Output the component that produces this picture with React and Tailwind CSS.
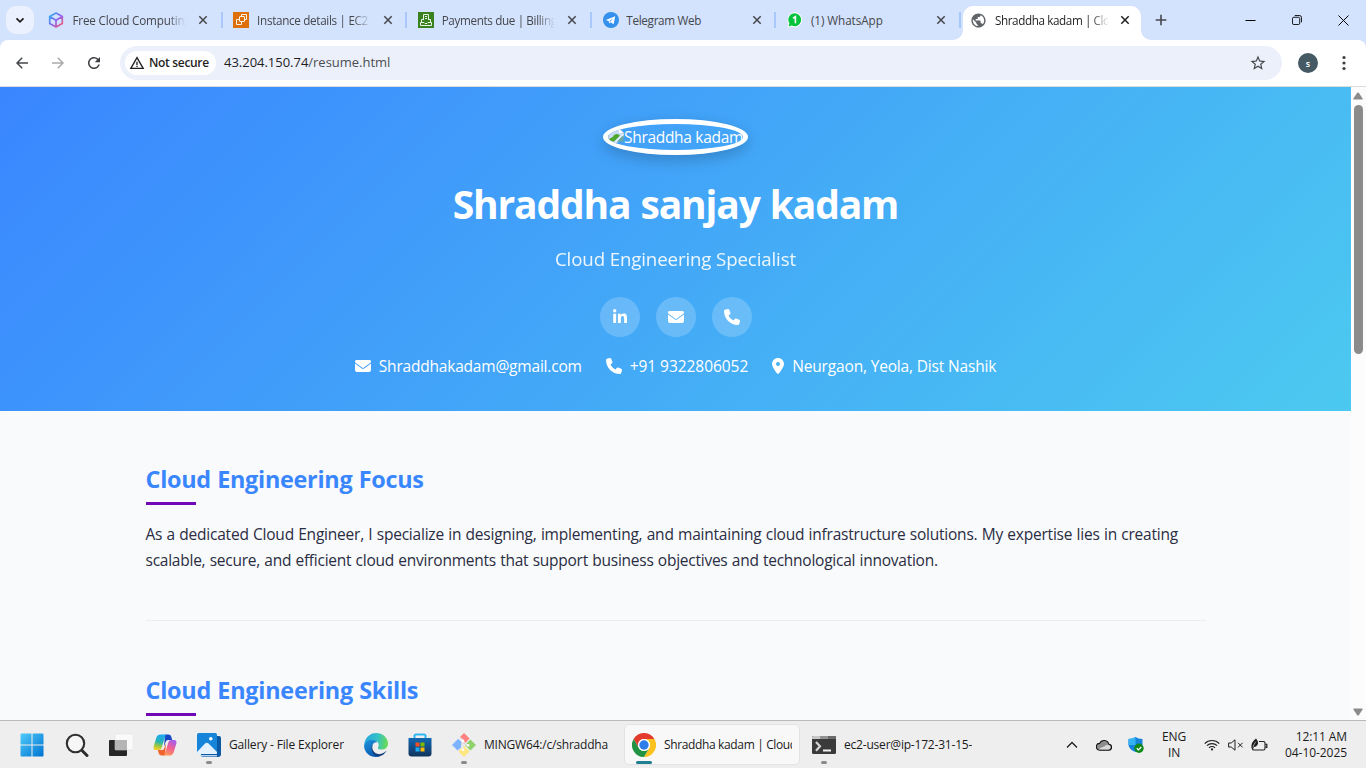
import { FaLinkedinIn, FaEnvelope, FaPhone, FaLocationDot } from "react-icons/fa6";
import { MdPublic, MdStarBorder, MdWarningAmber, MdRefresh } from "react-icons/md";

/* ---------- favicons ---------- */
const CubeIcon = () => (
  <svg viewBox="0 0 16 16" className="-ml-px mr-px size-4">
    <defs>
      <linearGradient id="cube" x1="0" y1="0" x2="1" y2="1">
        <stop offset="0" stopColor="#22b8f0" />
        <stop offset="0.5" stopColor="#8a63f5" />
        <stop offset="1" stopColor="#ff5a6e" />
      </linearGradient>
    </defs>
    <path d="M8 1 14.3 4.5V11.5L8 15 1.7 11.5V4.5ZM1.7 4.5 8 8.2 14.3 4.5M8 8.2V15" fill="none" stroke="url(#cube)" strokeWidth="1.7" strokeLinejoin="round" />
  </svg>
);
const Ec2Icon = () => (
  <svg viewBox="0 0 16 16" className="-ml-px mr-px size-4">
    <path d="M0 0H16V16H0Z" fill="#de700c" />
    <g fill="none" stroke="#fff3e3" strokeWidth="1">
      <rect x="6.5" y="4.5" width="5" height="5" rx=".5" />
      <path d="M8.5 4V2.5H13.5V7.5H12M6 7.5H3.5V12.5H8.5V10" />
    </g>
  </svg>
);
const BillingIcon = () => (
  <svg viewBox="0 0 16 16" className="size-4">
    <path d="M0 0H16V16H0Z" fill="#3a8220" />
    <g fill="none" stroke="#e9f5e2" strokeWidth="1">
      <path d="M5.5 8V2.5H10.5V8M7 4.5H9M7 6.5H9" />
      <path d="M5 7.5H3.5V10M11 7.5H12.5V10M2.5 10.5H6L7 11.5H9L10 10.5H13.5V13.5H2.5Z" />
    </g>
  </svg>
);
const TelegramIcon = () => (
  <svg viewBox="0 0 16 16" className="size-4">
    <circle cx="8" cy="8" r="8" fill="#3390ec" />
    <path d="M2.8 8 12.2 4.2 10.6 12.2 7.6 10.2 6.2 11.4 5.8 9.2Z" fill="#fff" />
    <path d="M6.3 9.2 10.5 5.9 7.2 9.8Z" fill="#3390ec" />
  </svg>
);
const WhatsAppIcon = () => (
  <svg viewBox="0 0 16 16" className="size-4">
    <path d="M8 .3A7.5 7.5 0 1 1 4.6 14.7L.5 15.6 1.4 11.4A7.5 7.5 0 0 1 8 .3Z" fill="#fff" />
    <path d="M8 1.3A6.5 6.5 0 1 1 4.7 13.6L1.6 14.4 2.4 11.3A6.5 6.5 0 0 1 8 1.3Z" fill="#06c33c" />
    <path d="M6 6.2 8.4 4.7V11.2" fill="none" stroke="#fff" strokeWidth="1.6" />
  </svg>
);
const Cross = () => (
  <svg viewBox="0 0 10 10" className="size-[10px] shrink-0">
    <path d="M1.3 1.3 8.7 8.7M8.7 1.3 1.3 8.7" stroke="currentColor" strokeWidth="1.5" />
  </svg>
);

const tabs = [
  { icon: <CubeIcon />, title: "Free Cloud Computing", cls: "tracking-[-0.19px]", fade: true },
  { icon: <Ec2Icon />, title: "Instance details | EC2", cls: "tracking-[-0.32px]", fade: true },
  { icon: <BillingIcon />, title: "Payments due | Billing", cls: "tracking-[-0.36px]", fade: true },
  { icon: <TelegramIcon />, title: "Telegram Web", cls: "tracking-[-0.3px]" },
  { icon: <WhatsAppIcon />, title: "(1) WhatsApp", cls: "tracking-[-0.05px]" },
];

const fadeMask = "[mask-image:linear-gradient(to_right,#000_84%,transparent)]";

function Tab({ icon, title, cls, fade }) {
  return (
    <div className="flex h-7 w-[184.6px] shrink-0 items-center pl-2 text-[#45474b]">
      {icon}
      <div className={`ml-[7.5px] w-[113.5px] overflow-hidden text-[11.7px] leading-4 whitespace-nowrap ${cls} ${fade ? fadeMask : ""}`}>{title}</div>
      <div className="ml-3"><Cross /></div>
      <div className="ml-[12.5px] h-4 w-[2px] bg-[#a8c7fa]" />
    </div>
  );
}

function TabStrip() {
  return (
    <div className="flex h-10 items-center bg-[#d3e2fd]">
      <div className="ml-[6px] grid size-7 place-items-center rounded-[10px] bg-[#ebf1fe]">
        <svg viewBox="0 0 10 10" className="size-[10px]"><path d="M1.5 3.3 5 6.8 8.5 3.3" fill="none" stroke="#1f1f1f" strokeWidth="1.8" /></svg>
      </div>
      <div className="ml-[7px] flex">
        {tabs.map((t) => <Tab key={t.title} {...t} />)}
      </div>
      <div className="relative -ml-px mt-[6px] flex h-[34px] w-[178px] items-center rounded-t-[10px] bg-white pb-[6px] pl-2 text-[#1f1f1f]">
        <svg viewBox="0 0 10 10" className="absolute -left-[10px] bottom-0 size-[10px]"><path d="M10 0V10H0A10 10 0 0 0 10 0Z" fill="#fff" /></svg>
        <svg viewBox="0 0 10 10" className="absolute -right-[10px] bottom-0 size-[10px]"><path d="M0 0V10H10A10 10 0 0 1 0 0Z" fill="#fff" /></svg>
        <MdPublic className="-ml-px size-[17px] text-[#5f6368]" />
        <div className={`ml-[8px] w-[114px] overflow-hidden text-[11.7px] leading-4 tracking-[-0.4px] whitespace-nowrap ${fadeMask}`}>Shraddha kadam | Cloud</div>
        <div className="ml-[11px]"><Cross /></div>
      </div>
      <svg viewBox="0 0 12 12" className="ml-[14px] size-3"><path d="M6 .7V11.3M.7 6H11.3" stroke="#45474b" strokeWidth="1.6" /></svg>
      <div className="mr-[17px] ml-auto flex items-center gap-[36px] text-black">
        <svg viewBox="0 0 11 11" className="size-[11px]"><path d="M.5 5.5H10.5" stroke="currentColor" /></svg>
        <svg viewBox="0 0 11 11" className="size-[10px]" fill="none" stroke="currentColor"><rect x=".5" y="2.5" width="8" height="8" rx="1.5" /><path d="M3 .5H8A2.5 2.5 0 0 1 10.5 3V8" /></svg>
        <svg viewBox="0 0 11 11" className="size-[11px]"><path d="M.5 .5 10.5 10.5M10.5 .5 .5 10.5" stroke="currentColor" /></svg>
      </div>
    </div>
  );
}

function Toolbar() {
  return (
    <div className="bg-[#d3e2fd]">
      <div className="flex h-[47px] items-center rounded-t-lg border-b border-[#dcdddf] bg-white">
        <svg viewBox="0 0 12 12" className="ml-4 size-3" fill="none" stroke="#45474b" strokeWidth="1.5"><path d="M12 6H1.2M6.2.8 1 6 6.2 11.2" /></svg>
        <svg viewBox="0 0 12 12" className="ml-6 size-3" fill="none" stroke="#a9aaac" strokeWidth="1.5"><path d="M0 6H10.8M5.8.8 11 6 5.8 11.2" /></svg>
        <MdRefresh className="ml-[21px] size-[18px] text-[#3c3e41]" />
        <div className="ml-[17px] flex h-[34px] w-[1162px] items-center rounded-full bg-[#ecf0fa] pl-[5px]">
          <div className="flex h-6 w-[91px] items-center rounded-full bg-white pl-1 text-[12px] font-semibold tracking-[-0.32px] text-[#1f1f1f]">
            <MdWarningAmber className="mr-[4px] size-4 shrink-0" />
            <span className="whitespace-nowrap">Not secure</span>
          </div>
          <div className="ml-2 text-[13px] tracking-[-0.02px] text-[#1f1f1f]">43.204.150.74<span className="text-[#4b4e53]">/resume.html</span></div>
          <MdStarBorder className="mr-[15px] ml-auto size-[18px] text-[#45474b]" />
        </div>
        <div className="ml-4 grid size-5 place-items-center rounded-full bg-[#455a64] text-[9px] leading-none font-semibold text-white">s</div>
        <svg viewBox="0 0 4 16" className="ml-[24px] h-4 w-1 fill-[#3c3e41]"><circle cx="2" cy="2.5" r="1.6" /><circle cx="2" cy="8" r="1.6" /><circle cx="2" cy="13.5" r="1.6" /></svg>
      </div>
    </div>
  );
}

/* ---------- page ---------- */
const BrokenImage = () => (
  <svg viewBox="0 0 16 16" className="mt-1 size-4 shrink-0">
    <path d="M.5 .5H11L15.5 5V8.5L8 15.5H.5Z" fill="#c9dbf7" stroke="#b9c3d3" />
    <path d="M11 .5V5H15.5Z" fill="#fff" />
    <path d="M1 11.5Q2.5 9.8 4.5 9.2Q6.5 5.2 10 6.2L12 7.6 6 13.5H1Z" fill="#4ea72e" />
    <path d="M14.8 7.5 9 13.5H15.5V8Z" fill="#6aa9a0" />
    <path d="M15.5 6 7 14.5" stroke="#fff" strokeWidth="1" />
  </svg>
);

function Hero() {
  const round = "grid size-10 place-items-center rounded-full bg-white/20";
  return (
    <header className="flex h-[324px] flex-col items-center bg-[linear-gradient(135deg,#3a86ff,#4cc9f0)] pt-8 text-white">
      <div className="flex h-9 w-[145px] items-start overflow-hidden rounded-[50%] border-[5px] border-white shadow-[0_5px_15px_rgba(0,0,0,0.2)]">
        <BrokenImage />
        <span className="text-[15.5px] leading-[27px] tracking-[-0.3px] whitespace-nowrap">Shraddha kadam</span>
      </div>
      <h1 className="mt-[17px] text-[39px] leading-[64px] font-bold tracking-[-1.15px] [word-spacing:1px]">Shraddha sanjay kadam</h1>
      <p className="mt-[7px] text-[18.7px] leading-[31px] tracking-[-0.13px] opacity-90">Cloud Engineering Specialist</p>
      <div className="mt-[23px] flex gap-4 text-base">
        <span className={round}><FaLinkedinIn /></span>
        <span className={round}><FaEnvelope /></span>
        <span className={round}><FaPhone /></span>
      </div>
      <div className="mt-4 flex gap-6 text-[15.5px] leading-[26px]">
        <span className="flex items-center gap-2"><FaEnvelope className="text-base" /><span className="tracking-[-0.2px]">Shraddhakadam@gmail.com</span></span>
        <span className="flex items-center gap-2"><FaPhone className="text-base" /><span className="tracking-[-0.05px]">+91 9322806052</span></span>
        <span className="flex items-center gap-2"><FaLocationDot className="w-3 text-base" /><span className="tracking-[-0.17px]">Neurgaon, Yeola, Dist Nashik</span></span>
      </div>
    </header>
  );
}

function Section({ title, cls, children }) {
  return (
    <section className={`border-b border-[#ebedf0] pb-[47px] ${cls}`}>
      <h2 className="text-[23.4px] leading-[38px] font-bold text-[#3a86ff]">{title}</h2>
      <div className="mt-[4px] h-[3px] w-[50px] bg-[#7209b7]" />
      {children}
    </section>
  );
}

function Page() {
  return (
    <div className="flex h-[633px]">
      <main className="h-full flex-1 overflow-hidden bg-[#f8fafc]">
        <Hero />
        <div className="mx-auto w-[1060px]">
          <Section title="Cloud Engineering Focus" cls="pt-[49px] tracking-[-0.27px] [word-spacing:0.5px]">
            <p className="mt-4 text-[15.5px] leading-[26px] whitespace-nowrap text-[#2b2d42] [word-spacing:0.5px]">
              <span className="block tracking-[-0.215px]">As a dedicated Cloud Engineer, I specialize in designing, implementing, and maintaining cloud infrastructure solutions. My expertise lies in creating</span>
              <span className="block tracking-[-0.245px]">scalable, secure, and efficient cloud environments that support business objectives and technological innovation.</span>
            </p>
          </Section>
          <Section title="Cloud Engineering Skills" cls="pt-[50px] tracking-[-0.24px] [word-spacing:0.5px]" />
        </div>
      </main>
      <div className="flex w-[15px] flex-col items-center bg-[#fcfcfc]">
        <svg viewBox="0 0 10 8" className="mt-[5px] -ml-px h-2 w-[10px] fill-[#8b8b8b]"><path d="M4.2 .8Q5 0 5.8 .8L9.6 6.4Q10 7.6 9 7.6H1Q0 7.6 .4 6.4Z" /></svg>
        <div className="mt-[5px] h-[249px] w-[9px] rounded-full bg-[#8b8b8b]" />
        <svg viewBox="0 0 10 8" className="mt-auto mb-[4px] -ml-px h-2 w-[10px] rotate-180 fill-[#8b8b8b]"><path d="M4.2 .8Q5 0 5.8 .8L9.6 6.4Q10 7.6 9 7.6H1Q0 7.6 .4 6.4Z" /></svg>
      </div>
    </div>
  );
}

/* ---------- taskbar ---------- */
const WindowsIcon = () => (
  <svg viewBox="0 0 24 24" className="size-6">
    <defs><linearGradient id="win" x1="0" y1="0" x2="1" y2="1"><stop offset="0" stopColor="#4fcbfb" /><stop offset="1" stopColor="#0072d0" /></linearGradient></defs>
    <path d="M1.5.5H11.5V11.5H.5V1.5Q.5.5 1.5.5ZM12.5.5H22.5Q23.5.5 23.5 1.5V11.5H12.5ZM.5 12.5H11.5V23.5H1.5Q.5 23.5.5 22.5ZM12.5 12.5H23.5V22.5Q23.5 23.5 22.5 23.5H12.5Z" fill="url(#win)" />
  </svg>
);
const SearchIcon = () => (
  <svg viewBox="0 0 24 24" className="size-6"><path d="M16.8 17.3 22 22.5" stroke="#2b2b2b" strokeWidth="3" strokeLinecap="round" /><circle cx="10.5" cy="10.5" r="8.7" fill="#f6f6f6" stroke="#2f2f2f" strokeWidth="2.1" /></svg>
);
const TaskViewIcon = () => (
  <svg viewBox="0 0 24 24" className="size-6">
    <rect x="0" y="7" width="18" height="16" rx="1" fill="#262626" />
    <rect x="6" y="1" width="18" height="16" rx="1" fill="#fafafa" stroke="#dedede" strokeWidth=".5" />
    <path d="M6 7H18V17H7Q6 17 6 16Z" fill="#b5b5b5" />
  </svg>
);
const CopilotIcon = () => (
  <svg viewBox="0 0 24 22" className="h-[22px] w-6">
    <defs>
      <linearGradient id="cpa" x1="0.4" y1="0" x2="0.2" y2="1"><stop offset="0" stopColor="#1fa7f2" /><stop offset=".45" stopColor="#26b7b0" /><stop offset=".75" stopColor="#a8c93a" /><stop offset="1" stopColor="#ffd02e" /></linearGradient>
      <linearGradient id="cpb" x1="0.7" y1="0" x2="0.3" y2="1"><stop offset="0" stopColor="#a45cf0" /><stop offset=".5" stopColor="#f2608f" /><stop offset="1" stopColor="#ff9a55" /></linearGradient>
    </defs>
    <path d="M12 .5H15.5Q17.6.5 18.2 2.6L19.2 6H15Q13.2 6 12.6 8L11 13Z" fill="#1747c4" />
    <path d="M12 21.5H8.5Q6.4 21.5 5.8 19.4L4.8 16H9Q10.8 16 11.4 14L13 9Z" fill="#f0652f" />
    <path d="M7.5.5H14Q12.5.9 11.9 3L8.6 14Q8 16 6 16H3Q0 16 .6 12.4L3.4 3.6Q4.4.5 7.5.5Z" fill="url(#cpa)" />
    <path d="M16.5 21.5H10Q11.5 21.1 12.1 19L15.4 8Q16 6 18 6H21Q24 6 23.4 9.6L20.6 18.4Q19.6 21.5 16.5 21.5Z" fill="url(#cpb)" />
  </svg>
);
const GalleryIcon = () => (
  <svg viewBox="0 0 24 24" className="size-6">
    <path d="M4 21H20V3H22Q24 3 24 5V21Q24 24 21 24H6Q4 24 4 22Z" fill="#0c59a4" />
    <rect width="20" height="21" rx="1.8" fill="#1684d8" />
    <path d="M0 19 8.3 10.3Q9.8 9 11.3 10.3L20 19V19.5Q20 21 18.4 21H1.6Q0 21 0 19.4Z" fill="#e4f2ff" />
    <circle cx="13.8" cy="5.8" r="1.8" fill="#fff" />
    <path d="M3 22H20V23.6H5Q3.4 23.6 3 22Z" fill="#b8d4ee" />
  </svg>
);
const EdgeIcon = () => (
  <svg viewBox="0 0 24 24" className="size-6">
    <defs>
      <linearGradient id="eg1" x1="0" y1=".4" x2="1" y2=".5"><stop offset="0" stopColor="#22a5e0" /><stop offset=".55" stopColor="#35c1c5" /><stop offset="1" stopColor="#6bdc52" /></linearGradient>
      <linearGradient id="eg2" x1="0" y1="0" x2=".6" y2="1"><stop offset="0" stopColor="#1d96de" /><stop offset="1" stopColor="#0b55ad" /></linearGradient>
    </defs>
    <path d="M.2 11.6C.8 4.9 6 0 12 0C18.8 0 24 4.8 24 10.4C24 14.3 21.2 16.6 17.8 16.6C14.8 16.6 13.4 15.4 13.9 14.4C15.8 11.7 14.4 7.6 9.5 7.4C5 7.2 1.2 9 .2 11.6Z" fill="url(#eg1)" />
    <path d="M.1 12.3C1 8.6 5 6.6 8.8 7.1C11.2 7.4 12.6 8.3 13.3 9.3C9.7 9.2 7.9 11.3 7.9 14.2C7.9 18.7 11.6 22.8 16 23.3C14.8 23.8 13.4 24 12 24C5.4 24-.3 18.7.1 12.3Z" fill="url(#eg2)" />
    <path d="M9.2 11.3C6.3 15.8 10.5 21.9 16.2 21.1C18.8 20.7 21 19.6 22.6 17.6C21 21 17.7 23.4 14.8 23.4C10.3 23.3 7.6 19 7.6 15.4C7.6 13.6 8.2 12.2 9.2 11.3Z" fill="#103f7c" />
  </svg>
);
const StoreIcon = () => (
  <svg viewBox="0 0 24 24" className="size-6">
    <defs><linearGradient id="store" x1="0" y1="0" x2="0" y2="1"><stop offset="0" stopColor="#1268b3" /><stop offset="1" stopColor="#12325c" /></linearGradient></defs>
    <path d="M6.5 6V3Q6.5 1.5 8 1.5H16Q17.5 1.5 17.5 3V6" fill="none" stroke="#2fb9f3" strokeWidth="2" />
    <path d="M.5 5H23.5V20.5Q23.5 23.5 20.5 23.5H3.5Q.5 23.5.5 20.5Z" fill="url(#store)" />
    <path d="M7.5 9.5H11.5V13.5H7.5Z" fill="#f25022" /><path d="M12.5 9.5H16.5V13.5H12.5Z" fill="#7fba00" />
    <path d="M7.5 14.5H11.5V18.5H7.5Z" fill="#1fa9f2" /><path d="M12.5 14.5H16.5V18.5H12.5Z" fill="#ffb900" />
  </svg>
);
const GitIcon = () => (
  <svg viewBox="0 0 24 24" className="size-6">
    <path d="M12 0 17.6 5.6 12 11.2 10.5 9.7V6.5L7.5 4.5Z" fill="#ff8080" />
    <path d="M18.4 6.4 24 12 18.4 17.6 12.8 12Z" fill="#8fd16b" />
    <path d="M6.2 5.8 9.5 9 9 14.6 5.6 17.6 0 12Z" fill="#80b3ff" />
    <path d="M12 12.8 17.6 18.4 12 24 6.4 18.4Z" fill="#ffe680" />
    <path d="M8 4.5 11 7.8V17M11 8.5 16 12.5" stroke="#e7e5e8" strokeWidth="1.4" fill="none" />
    <circle cx="11" cy="8" r="1.4" fill="#fff" /><circle cx="16" cy="12.3" r="1.4" fill="#fff" /><circle cx="11" cy="16.8" r="1.4" fill="#fff" />
  </svg>
);
const ChromeIcon = () => (
  <svg viewBox="0 0 24 24" className="size-6">
    <path d="M1.6 6A12 12 0 0 1 22.4 6L12 6A6 6 0 0 0 6.8 15Z" fill="#e33b2e" />
    <path d="M22.4 6A12 12 0 0 1 12 24L17.2 15A6 6 0 0 0 12 6Z" fill="#fcc31e" />
    <path d="M12 24A12 12 0 0 1 1.6 6L6.8 15A6 6 0 0 0 17.2 15Z" fill="#229342" />
    <circle cx="12" cy="12" r="6" fill="#fff" /><circle cx="12" cy="12" r="4.7" fill="#2f7de9" />
  </svg>
);
const TerminalIcon = () => (
  <svg viewBox="0 0 24 18" className="h-[18px] w-6">
    <rect width="24" height="18" rx="1.2" fill="#3a3a3a" />
    <path d="M1.2 0H8V3H0V1.2Q0 0 1.2 0Z" fill="#c8c8c8" /><path d="M8 0H16V3H8Z" fill="#929292" /><path d="M16 0H22.8Q24 0 24 1.2V3H16Z" fill="#6b6b6b" />
    <path d="M4 6 8 10.3 4 14.8" fill="none" stroke="#d4d4d4" strokeWidth="2.2" /><path d="M11 14.5H19" stroke="#f2f2f2" strokeWidth="2" />
  </svg>
);
const TrayCloud = () => (
  <svg viewBox="0 0 16 12" className="h-3 w-4"><path d="M3.8 11.2H12.4A3 3 0 0 0 12.8 5.2A4.8 4.8 0 0 0 3.7 4.4A3.4 3.4 0 0 0 3.8 11.2Z" fill="#8e8e8e" /><path d="M4 10.7H12.4A2.5 2.5 0 0 0 12.6 5.8Q10.6 5.4 8.8 7.2Q5 8 2.6 10.3Z" fill="#d9d9d9" /><path d="M3.8 11.2H12.4A3 3 0 0 0 12.8 5.2A4.8 4.8 0 0 0 3.7 4.4A3.4 3.4 0 0 0 3.8 11.2Z" fill="none" stroke="#141414" strokeWidth="1.1" /></svg>
);
const ShieldIcon = () => (
  <svg viewBox="0 0 16 16" className="size-4">
    <path d="M7.5 0Q10 2 14.5 2V8Q14 12.5 7.5 15Q1 12.5.5 8V2Q5 2 7.5 0Z" fill="#1583dc" />
    <path d="M7.5 0V8H.5V2Q5 2 7.5 0Z" fill="#35b3f0" />
    <circle cx="11" cy="11.3" r="4.7" fill="#108a1b" /><path d="M8.8 11.3 10.4 12.9 13.3 10" fill="none" stroke="#fff" strokeWidth="1.3" />
  </svg>
);
const WifiIcon = () => (
  <svg viewBox="0 0 16 12" className="h-3 w-4" fill="none" stroke="#1f1f1f" strokeWidth="1.1"><path d="M.7 4.6A10.3 10.3 0 0 1 15.3 4.6M2.9 6.7A7.2 7.2 0 0 1 13.1 6.7M5 8.8A4.3 4.3 0 0 1 11 8.8" /><circle cx="8" cy="10.4" r="1.1" fill="#1f1f1f" stroke="none" /></svg>
);
const MuteIcon = () => (
  <svg viewBox="0 0 16 12" className="h-3 w-4" fill="none" stroke="#1f1f1f" strokeWidth="1"><path d="M.6 4H3.2L7 .8V11.2L3.2 8H.6Z" strokeLinejoin="round" /><path d="M10 3.8 14.6 8.4M14.6 3.8 10 8.4" /></svg>
);
const BatteryIcon = () => (
  <svg viewBox="0 0 17 14" className="h-[14px] w-[17px]"><path d="M8 3.5H12.5Q14 3.5 14 5V10.5Q14 12 12.5 12H3Q1.5 12 1.5 11" fill="none" stroke="#1f1f1f" strokeWidth="1.1" /><path d="M14.5 6.3H15.8V9.3H14.5" fill="none" stroke="#1f1f1f" strokeWidth="1.2" /><path d="M.4 9.6Q0 4 5 .4Q8.2 4 6.4 7Q5.2 9 3 9L2 11H1Z" fill="#1f1f1f" /><path d="M1.9 9.5Q2.8 6 4.8 3.8" stroke="#eee" strokeWidth=".6" fill="none" /></svg>
);

function TaskApp({ icon, label, cls, wrap, dot }) {
  return (
    <div className={`relative flex h-[39px] items-center ${wrap}`}>
      {icon}
      <span className={`ml-2 overflow-hidden text-[12px] leading-4 whitespace-nowrap text-[#1b1b1b] ${cls}`}>{label}</span>
      <span className={`absolute bottom-0 h-[3px] rounded-full ${dot}`} />
    </div>
  );
}

function Taskbar() {
  return (
    <div className="flex h-12 items-center border-t border-[#b9babb] bg-[#eeeeee]">
      <div className="ml-5"><WindowsIcon /></div>
      <div className="ml-[21px]"><SearchIcon /></div>
      <div className="ml-5"><TaskViewIcon /></div>
      <div className="ml-5"><CopilotIcon /></div>
      <TaskApp icon={<GalleryIcon />} label="Gallery - File Explorer" wrap="ml-5 w-[148px]" cls="tracking-[-0.15px]" dot="left-[9px] w-[6px] bg-[#8b8b8b]" />
      <div className="ml-[19px]"><EdgeIcon /></div>
      <div className="ml-5"><StoreIcon /></div>
      <TaskApp icon={<GitIcon />} label="MINGW64:/c/shraddha" wrap="ml-5 w-[160px]" cls="w-[128px] tracking-[-0.2px]" dot="left-[9px] w-[6px] bg-[#8b8b8b]" />
      <TaskApp icon={<ChromeIcon />} label="Shraddha kadam | Cloud" wrap="ml-[13px] w-[174px] rounded bg-[#f8f8f8] shadow-[0_0_0_1px_#e3e3e3] pl-[7px]" cls="w-[128px] tracking-[-0.36px]" dot="left-[11px] w-4 bg-[#1f7f93]" />
      <TaskApp icon={<TerminalIcon />} label="ec2-user@ip-172-31-15-" wrap="ml-[13px] w-[162px]" cls="tracking-[-0.2px]" dot="left-[9px] w-[6px] bg-[#8b8b8b]" />
      <div className="mr-[19px] ml-auto flex items-center text-[#1b1b1b]">
        <svg viewBox="0 0 12 8" className="h-2 w-3"><path d="M1 6.5 6 1.5 11 6.5" fill="none" stroke="#1f1f1f" strokeWidth="1.3" /></svg>
        <div className="ml-[18px]"><TrayCloud /></div>
        <div className="ml-[16px]"><ShieldIcon /></div>
        <div className="ml-[15px] w-[30px] text-center text-[12px] leading-4 tracking-[-0.14px]">ENG<br />IN</div>
        <div className="ml-[15px]"><WifiIcon /></div>
        <div className="ml-[8px]"><MuteIcon /></div>
        <div className="ml-[7px]"><BatteryIcon /></div>
        <div className="ml-[16px] w-[63px] text-right text-[12px] leading-4 whitespace-nowrap"><span className="tracking-[-0.12px]">12:11 AM</span><br /><span className="tracking-[-0.06px]">04-10-2025</span></div>
      </div>
    </div>
  );
}

export default function App() {
  return (
    <div className="flex h-[768px] w-[1366px] flex-col overflow-hidden font-['Open_Sans','Noto_Sans',sans-serif]">
      <TabStrip />
      <Toolbar />
      <Page />
      <Taskbar />
    </div>
  );
}
